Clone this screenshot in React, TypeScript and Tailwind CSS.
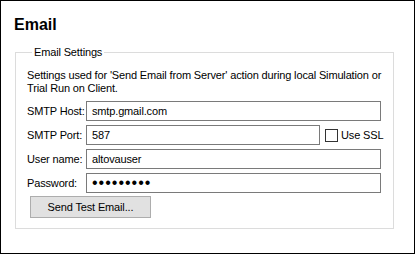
const font = { fontFamily: '"Liberation Sans", Arial, sans-serif' };

const inputCls =
  "h-[20px] border border-[#7a7a7a] bg-white pl-[5px] text-[11px] tracking-[-0.15px] leading-[18px] text-black outline-none";

function Row({ label, children }: { label: string; children: React.ReactNode }) {
  return (
    <div className="flex items-center">
      <label className="w-[59px] shrink-0 whitespace-nowrap">{label}</label>
      {children}
    </div>
  );
}

export default function App() {
  return (
    <div
      className="h-[254px] w-[415px] border border-black bg-white pl-[13px] pt-[15px] text-black"
      style={font}
    >
      <h1 className="text-[16px] font-bold leading-[18px]">Email</h1>
      <fieldset className="ml-[1px] mt-[12px] h-[183px] w-[377px] border border-[#dcdcdc] pl-[11px] pr-[10px] text-[11px] tracking-[-0.15px]">
        <legend className="ml-[5px] whitespace-nowrap px-[2px] leading-[13px]">Email Settings</legend>
        <p className="mt-[10px] whitespace-nowrap leading-[13px]">
          Settings used for 'Send Email from Server' action during local Simulation or
          <br />
          Trial Run on Client.
        </p>
        <div className="mt-[6px] flex flex-col gap-[4px]">
          <Row label="SMTP Host:">
            <input className={`${inputCls} w-[295px]`} defaultValue="smtp.gmail.com" />
          </Row>
          <Row label="SMTP Port:">
            <input className={`${inputCls} w-[234px]`} defaultValue="587" />
            <span className="ml-[5px] h-[13px] w-[13px] border border-[#333333] bg-white" />
            <span className="ml-[3px] whitespace-nowrap">Use SSL</span>
          </Row>
          <Row label="User name:">
            <input className={`${inputCls} w-[295px]`} defaultValue="altovauser" />
          </Row>
          <Row label="Password:">
            <input
              type="password"
              className="h-[20px] w-[295px] border border-[#7a7a7a] bg-white pl-[5px] text-[16px] leading-[18px] tracking-[1px] text-black outline-none"
              defaultValue="altovapwd"
            />
          </Row>
        </div>
        <button className="ml-[3px] mt-[3px] h-[22px] w-[121px] border border-[#adadad] bg-[#e1e1e1] text-black">
          Send Test Email...
        </button>
      </fieldset>
    </div>
  );
}
